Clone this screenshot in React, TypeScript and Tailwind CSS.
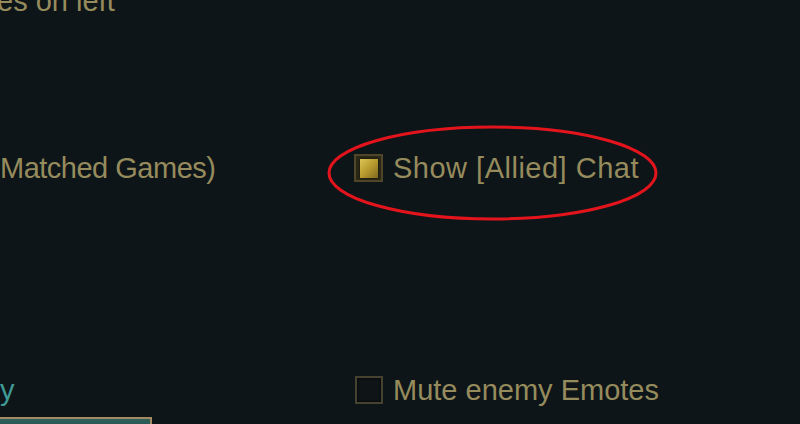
import React from 'react'

const font = { fontFamily: '"Liberation Sans", Arial, sans-serif' }

const Checkbox = ({ checked }: { checked?: boolean }) => (
  <div
    className={
      checked
        ? 'w-[29px] h-[28px] shrink-0 border-2 border-[#4f4528] bg-[#2c2817] flex items-center justify-center'
        : 'w-[28px] h-[28px] shrink-0 border-2 border-[#45422f] bg-[#0f1416] shadow-[inset_0_0_3px_rgba(0,0,0,0.9)]'
    }
  >
    {checked && (
      <div className="w-[18px] h-[19px] bg-gradient-to-br from-[#dcc553] via-[#b89a2e] to-[#7d6a1f] shadow-[0_0_2px_rgba(0,0,0,0.8)]" />
    )}
  </div>
)

const Option = ({ label, checked, tracking }: { label: string; checked?: boolean; tracking: string }) => (
  <div className="flex items-center gap-[10px] h-[36px]">
    <Checkbox checked={checked} />
    <span className={`text-[29px] leading-[36px] text-[#968b5c] whitespace-nowrap ${tracking}`} style={font}>
      {label}
    </span>
  </div>
)

export default function App() {
  return (
    <div className="relative w-[800px] h-[424px] overflow-hidden bg-[#0d1519]">
      <div className="flex flex-col">
        <div className="mt-[-17px] h-[36px] ml-[-3px] text-[29px] leading-[36px] text-[#968b5c] whitespace-nowrap" style={font}>
          es on left
        </div>

        <div className="mt-[131px] grid grid-cols-[354px_1fr]">
          <div className="h-[36px] text-[29px] leading-[36px] text-[#968b5c] whitespace-nowrap tracking-[-0.5px]" style={font}>
            Matched Games)
          </div>
          <Option label="Show [Allied] Chat" checked tracking="tracking-[0.5px]" />
        </div>

        <div className="mt-[186px] grid grid-cols-[355px_1fr]">
          <div className="h-[36px] text-[29px] leading-[36px] text-[#3f9a93] whitespace-nowrap" style={font}>
            y
          </div>
          <Option label="Mute enemy Emotes" tracking="tracking-[0px]" />
        </div>

        <div className="mt-[9px] ml-[-2px] w-[154px] h-[30px] border-2 border-[#a28b62] bg-gradient-to-b from-[#2e5f5a] to-[#1d3b39]" />
      </div>

      <svg className="absolute left-0 top-0 pointer-events-none" width="800" height="424">
        <ellipse cx="492.5" cy="173" rx="163.5" ry="46" fill="none" stroke="#e3141c" strokeWidth="3" />
      </svg>
    </div>
  )
}
